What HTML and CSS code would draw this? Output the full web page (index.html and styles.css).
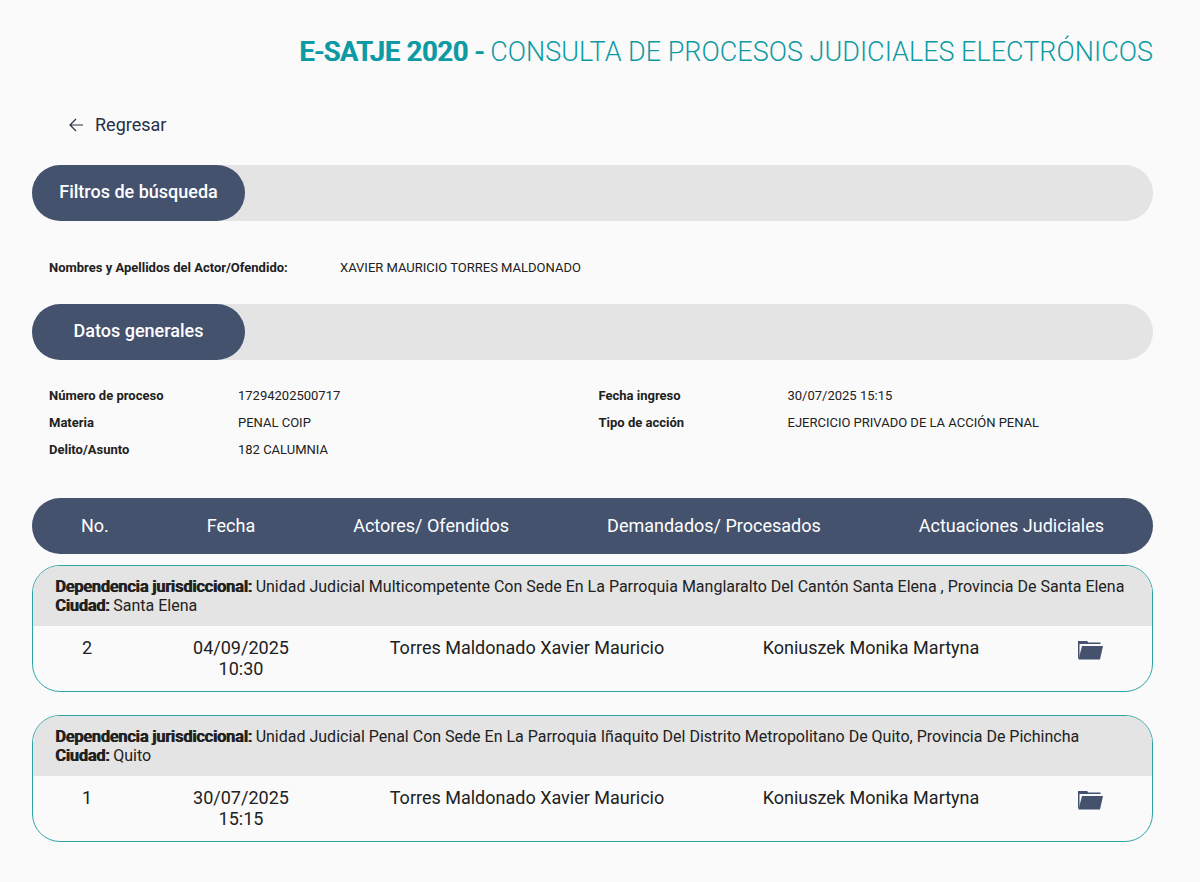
FILE: index.html
```html
<!DOCTYPE html>
<html lang="es">
<head>
  <meta charset="UTF-8" />
  <title>E-SATJE 2020 - Consulta de Procesos Judiciales Electrónicos</title>
  <meta name="viewport" content="width=device-width, initial-scale=1.0" />
  <link rel="stylesheet" href="styles.css">
</head>
<body>
  <h1 class="titulo"><strong>E-SATJE 2020 -</strong> CONSULTA DE PROCESOS JUDICIALES ELECTRÓNICOS</h1>

  <a class="regresar" href="#">
    <svg width="14" height="14" viewBox="0 0 14 14" fill="none" stroke="currentColor" stroke-width="1.2" aria-hidden="true">
      <path d="M14 7H1M7 1L1 7l6 6" />
    </svg>
    Regresar
  </a>

  <!-- Filtros -->
  <div class="barra"><h2 class="barra-titulo">Filtros de búsqueda</h2></div>
  <dl class="filtros">
    <dt>Nombres y Apellidos del Actor/Ofendido:</dt>
    <dd>XAVIER MAURICIO TORRES MALDONADO</dd>
  </dl>

  <!-- Datos generales -->
  <div class="barra"><h2 class="barra-titulo">Datos generales</h2></div>
  <div class="datos">
    <dl class="datos-lista">
      <dt>Número de proceso</dt>
      <dd>17294202500717</dd>
      <dt>Materia</dt>
      <dd>PENAL COIP</dd>
      <dt>Delito/Asunto</dt>
      <dd>182 CALUMNIA</dd>
    </dl>
    <dl class="datos-lista">
      <dt>Fecha ingreso</dt>
      <dd>30/07/2025 15:15</dd>
      <dt>Tipo de acción</dt>
      <dd>EJERCICIO PRIVADO DE LA ACCIÓN PENAL</dd>
    </dl>
  </div>

  <!-- Movimientos -->
  <table class="movimientos">
    <thead>
      <tr class="cabecera">
        <th>No.</th>
        <th>Fecha</th>
        <th>Actores/ Ofendidos</th>
        <th>Demandados/ Procesados</th>
        <th>Actuaciones Judiciales</th>
      </tr>
    </thead>
    <tbody class="tarjeta">
      <tr class="dependencia">
        <td colspan="5">
          <strong>Dependencia jurisdiccional:</strong> Unidad Judicial Multicompetente Con Sede En La Parroquia Manglaralto Del Cantón Santa Elena , Provincia De Santa Elena<br>
          <strong>Ciudad:</strong> Santa Elena
        </td>
      </tr>
      <tr class="fila">
        <td>2</td>
        <td>04/09/2025<br>10:30</td>
        <td>Torres Maldonado Xavier Mauricio</td>
        <td>Koniuszek Monika Martyna</td>
        <td>
          <a class="carpeta" href="#" aria-label="Actuaciones judiciales">
            <svg width="25" height="19" viewBox="0 0 25 19" fill="currentColor" aria-hidden="true">
              <path d="M0 0h9l1.500 1.500H22.500V3H1.500v12L0 18.500z" />
              <path d="M4 5H25l-3 13.500H.5z" />
            </svg>
          </a>
        </td>
      </tr>
    </tbody>
    <tbody class="tarjeta">
      <tr class="dependencia">
        <td colspan="5">
          <strong>Dependencia jurisdiccional:</strong> Unidad Judicial Penal Con Sede En La Parroquia Iñaquito Del Distrito Metropolitano De Quito, Provincia De Pichincha<br>
          <strong>Ciudad:</strong> Quito
        </td>
      </tr>
      <tr class="fila">
        <td>1</td>
        <td>30/07/2025<br>15:15</td>
        <td>Torres Maldonado Xavier Mauricio</td>
        <td>Koniuszek Monika Martyna</td>
        <td>
          <a class="carpeta" href="#" aria-label="Actuaciones judiciales">
            <svg width="25" height="19" viewBox="0 0 25 19" fill="currentColor" aria-hidden="true">
              <path d="M0 0h9l1.500 1.500H22.500V3H1.500v12L0 18.500z" />
              <path d="M4 5H25l-3 13.500H.5z" />
            </svg>
          </a>
        </td>
      </tr>
    </tbody>
  </table>
</body>
</html>
```

FILE: styles.css
```css
* {
  box-sizing: border-box;
}
body {
  font-family: Roboto, sans-serif;
  background: #fafafa;
  color: #212121;
  margin: 0;
  padding: 33px 47px 40px 32px;
}
.titulo {
  margin: 0;
  font-size: 27px;
  line-height: 38px;
  font-weight: 300;
  text-align: right;
  color: #0e9aa4;
}
.titulo strong,
.dependencia strong {
  font-weight: 500;
  text-shadow: 1px 0 currentColor;
}
.regresar {
  display: inline-flex;
  align-items: center;
  gap: 12px;
  margin: 42px 0 28px 37px;
  font-size: 18px;
  line-height: 24px;
  color: #263046;
  text-decoration: none;
}
.barra {
  background: #e4e4e4;
  border-radius: 28px;
}
.barra-titulo {
  width: 213px;
  margin: 0;
  padding: 15px 0 17px;
  border-radius: 28px;
  background: #44526e;
  color: white;
  font-size: 18px;
  line-height: 24px;
  font-weight: 500;
  text-align: center;
}
dl {
  margin: 0;
  font-size: 13px;
  line-height: 27px;
}
dt {
  font-weight: 700;
}
dd {
  margin: 0;
}
.filtros {
  display: grid;
  grid-template-columns: 291px 1fr;
  padding: 33px 17px 23px;
}
.datos {
  display: grid;
  grid-template-columns: 1fr 1fr;
  padding: 22px 5px 35px 17px;
}
.datos-lista {
  display: grid;
  grid-template-columns: 189px 1fr;
  align-content: start;
}
.movimientos,
.movimientos thead {
  display: block;
  border-collapse: collapse;
}
.cabecera {
  display: flex;
  justify-content: space-around;
  padding: 16px 0;
  border-radius: 28px;
  background: #44526e;
  color: white;
  font-size: 18px;
  line-height: 24px;
}
.cabecera th {
  padding: 0;
  font-weight: 400;
}
.tarjeta {
  display: block;
  margin-top: 11px;
  border: 1px solid #2fa3a3;
  border-radius: 28px;
  overflow: hidden;
}
.tarjeta + .tarjeta {
  margin-top: 23px;
}
.tarjeta td {
  padding: 0;
}
.dependencia {
  display: block;
  padding: 11px 22px;
  background: #e4e4e4;
  font-size: 16px;
  line-height: 19px;
}
.fila {
  display: grid;
  grid-template-columns: 108fr 200fr 372fr 316fr 123fr;
  padding: 11px 0 12px;
  font-size: 18px;
  line-height: 21px;
  text-align: center;
}
.carpeta {
  color: #44526e;
}
.carpeta svg {
  display: block;
  margin: 4px auto 0;
}
```
